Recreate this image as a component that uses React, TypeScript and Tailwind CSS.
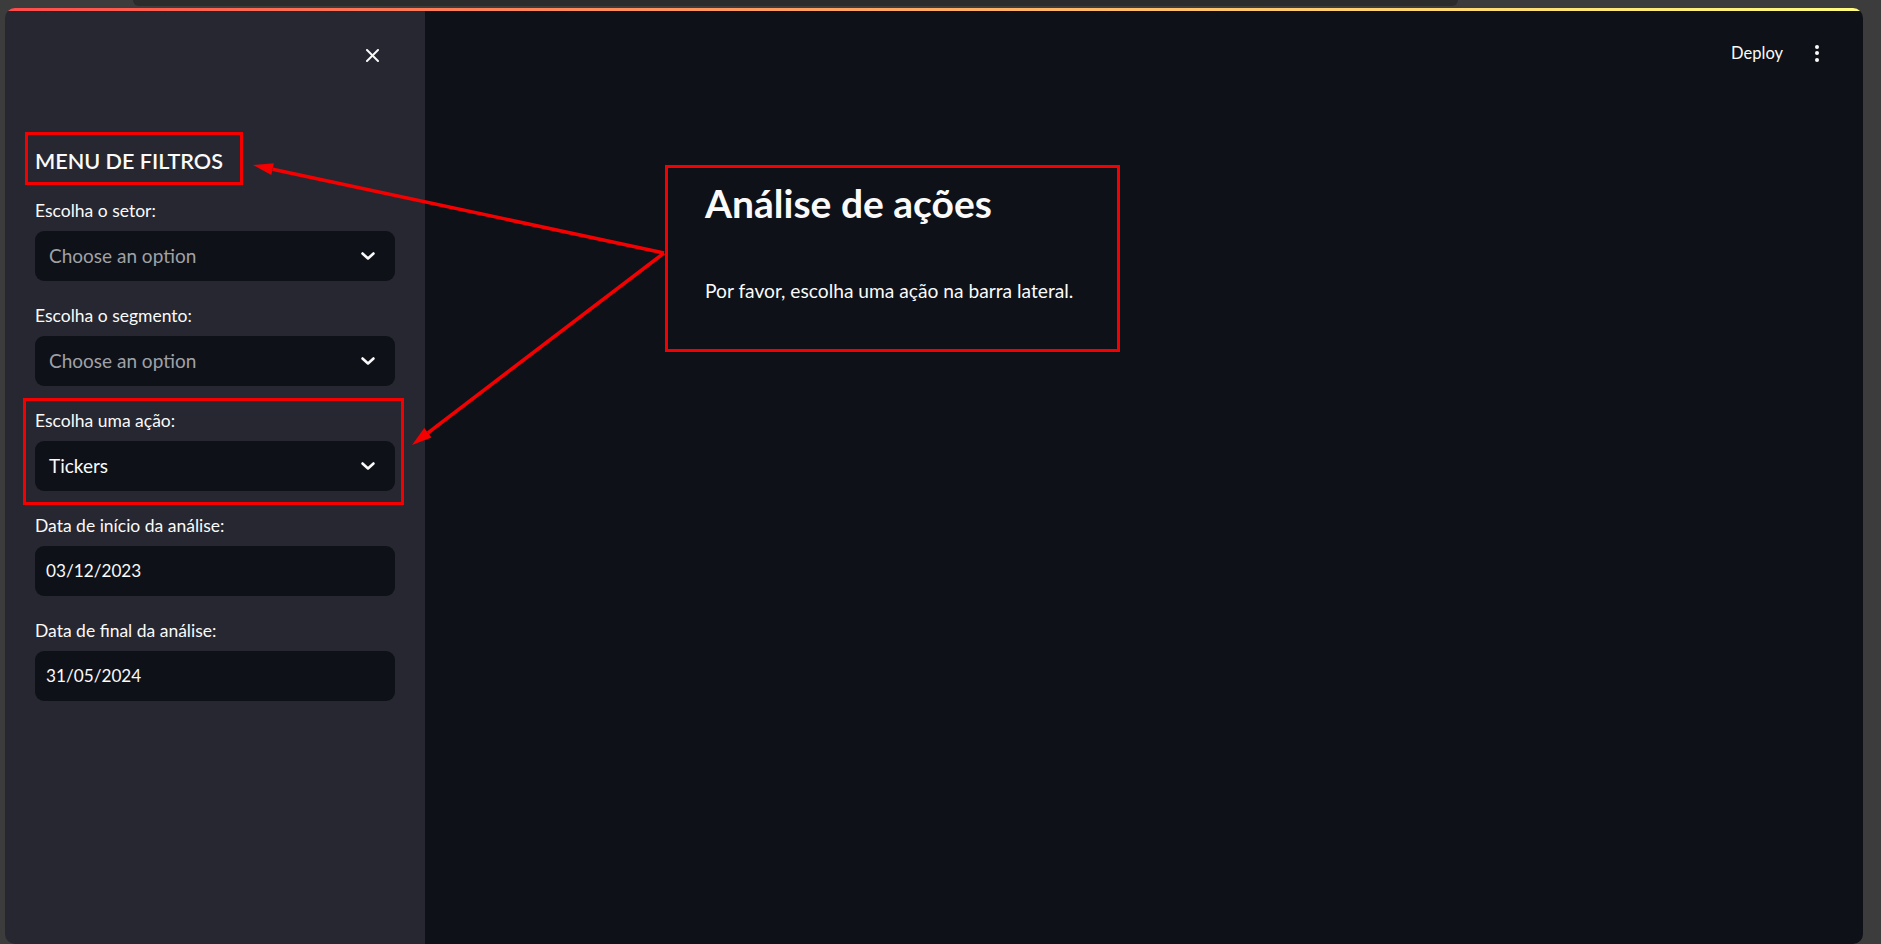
import React from "react";

const Chevron = () => (
  <svg width="24" height="24" viewBox="0 0 24 24" fill="none" stroke="#fafafa" strokeWidth="2.6" strokeLinecap="round" strokeLinejoin="round">
    <polyline points="6.5 9.5 12 14.5 17.5 9.5" />
  </svg>
);

const Field = ({
  label,
  value,
  placeholder,
  kind,
  highlight,
}: {
  label: string;
  value: string;
  placeholder?: boolean;
  kind: "select" | "date";
  highlight?: boolean;
}) => (
  <div className="relative mb-[23px]">
    {highlight && (
      <div className="absolute left-[-12px] top-[-11px] w-[381px] h-[107px] border-[3px] border-[#f50000] pointer-events-none" />
    )}
    <div className="h-[24px] leading-[24px] text-[17.5px] text-[#fafafa] mb-[8px]">{label}</div>
    <div className="h-[50px] rounded-[9px] bg-[#0e1117] flex items-center justify-between">
      <span
        className={
          (kind === "select" ? "pl-[14px] text-[19px] " : "pl-[11px] text-[17.2px] ") +
          (placeholder ? "text-[#a0a1a8]" : "text-[#fafafa]")
        }
      >
        {value}
      </span>
      {kind === "select" && (
        <span className="pr-[15px] flex items-center">
          <Chevron />
        </span>
      )}
    </div>
  </div>
);

export default function App() {
  return (
    <div
      className="relative w-[1881px] h-[944px] bg-[#3c3c3c] flex flex-col overflow-hidden"
      style={{ fontFamily: "Lato, 'Noto Sans', sans-serif" }}
    >
      <div className="h-[8px] shrink-0 flex">
        <div className="ml-[133px] w-[1325px] h-[6px] bg-[#2c2c2c] rounded-b-[6px]" />
      </div>
      <div className="flex-1 flex pl-[5px] pr-[18px] min-h-0">
        <div className="flex-1 flex flex-col rounded-[10px] overflow-hidden">
          <div className="h-[3px] shrink-0 bg-linear-to-r from-[#ff4b4b] to-[#fffd80]" />
          <div className="flex-1 flex min-h-0">
            {/* Sidebar */}
            <aside className="w-[420px] shrink-0 bg-[#262730] px-[30px] flex flex-col">
              <div className="pt-[38px] flex justify-end pr-[16px]">
                <svg width="13" height="13" viewBox="0 0 13 13" stroke="#fafafa" strokeWidth="2" strokeLinecap="round">
                  <line x1="1" y1="1" x2="12" y2="12" />
                  <line x1="12" y1="1" x2="1" y2="12" />
                </svg>
              </div>
              <div className="relative mt-[84px] h-[30px] mb-[23px]">
                <div className="absolute left-[-10px] top-[-14px] w-[218px] h-[53px] border-[3px] border-[#f50000] pointer-events-none" />
                <h3 className="leading-[30px] text-[21.6px] font-semibold text-[#fafafa]">MENU DE FILTROS</h3>
              </div>
              <Field label="Escolha o setor:" value="Choose an option" placeholder kind="select" />
              <Field label="Escolha o segmento:" value="Choose an option" placeholder kind="select" />
              <Field label="Escolha uma ação:" value="Tickers" kind="select" highlight />
              <Field label="Data de início da análise:" value="03/12/2023" kind="date" />
              <Field label="Data de final da análise:" value="31/05/2024" kind="date" />
            </aside>
            {/* Main */}
            <main className="flex-1 bg-[#0e1117] flex flex-col">
              <div className="pt-[30px] h-[54px] flex items-center justify-end pr-[44px]">
                <span className="text-[16.5px] text-[#fafafa] mr-[32px] leading-[24px]">Deploy</span>
                <div className="flex flex-col gap-[2.5px] items-center">
                  <span className="w-[4px] h-[4px] rounded-full bg-[#fafafa]" />
                  <span className="w-[4px] h-[4px] rounded-full bg-[#fafafa]" />
                  <span className="w-[4px] h-[4px] rounded-full bg-[#fafafa]" />
                </div>
              </div>
              <div className="mt-[100px] ml-[240px] w-[455px] h-[187px] border-[3px] border-[#f50000] pl-[37px] pt-[11px]">
                <h1 className="text-[39px] leading-[48px] font-bold text-[#fafafa]">Análise de ações</h1>
                <p className="mt-[50px] text-[19.2px] leading-[28px] text-[#fafafa]">
                  Por favor, escolha uma ação na barra lateral.
                </p>
              </div>
            </main>
          </div>
        </div>
      </div>
      {/* Annotation arrows */}
      <svg className="absolute inset-0 pointer-events-none" width="1881" height="944" viewBox="0 0 1881 944">
        <line x1="664" y1="253" x2="272.6" y2="169.2" stroke="#f50000" strokeWidth="3.5" />
        <polygon points="253,165 273.8,163.3 271.3,175.1" fill="#f50000" />
        <line x1="664" y1="253" x2="427.9" y2="432.8" stroke="#f50000" strokeWidth="3.5" />
        <polygon points="412,445 424.3,428 431.5,437.6" fill="#f50000" />
      </svg>
    </div>
  );
}
